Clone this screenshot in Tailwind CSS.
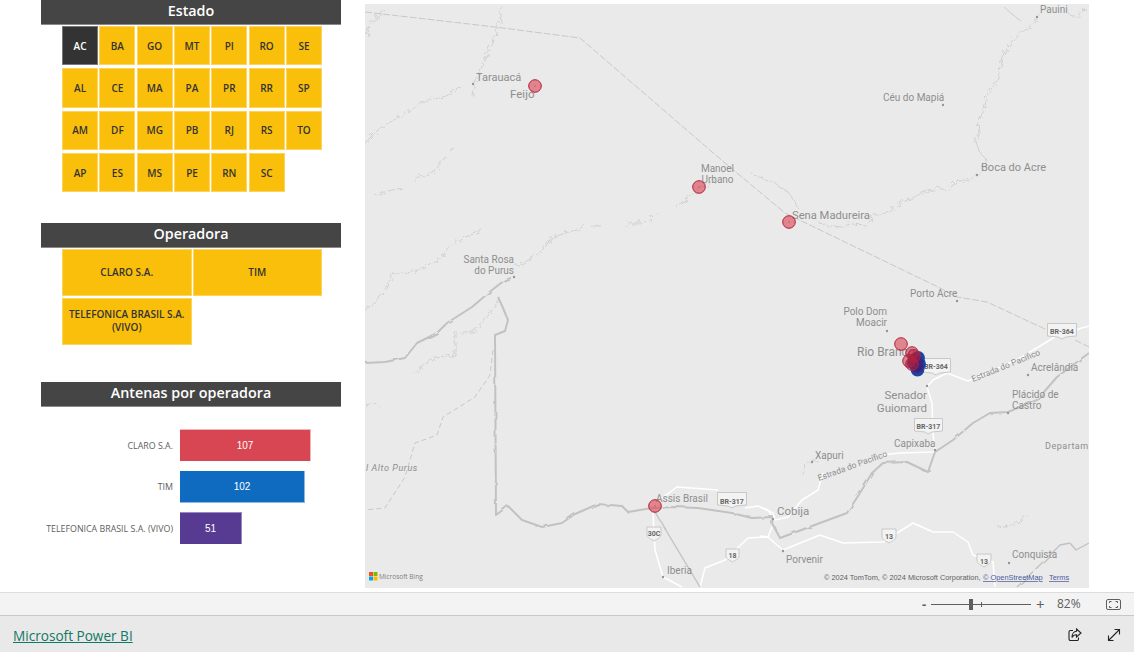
<!DOCTYPE html>
<html lang="pt-BR">
<head>
  <meta charset="UTF-8" />
  <title>Antenas por operadora</title>
  <script src="https://cdn.jsdelivr.net/npm/@tailwindcss/browser@4"></script>
</head>
<body class="bg-white w-[1134px] h-[652px] overflow-hidden font-['Open_Sans',sans-serif]">
  <div class="flex h-[592px]">
    <!-- Filtros -->
    <div class="ml-[41px] w-[300px] shrink-0">
      <h2 class="h-[25px] bg-[#454545] border-b border-[#8a8a8a] text-white text-[14.3px] leading-[21px] font-semibold text-center">Estado</h2>
      <div class="mt-px ml-[21px] w-[260px] grid grid-cols-7 gap-x-[1.2px] gap-y-[3px] auto-rows-[39.3px] text-[10px] font-semibold text-[#333]">
        <div class="flex items-center justify-center pt-px bg-[#333] border border-[#777] text-white">AC</div>
        <div class="flex items-center justify-center pt-px bg-[#fabf0b] border border-[#fcd35c]">BA</div>
        <div class="flex items-center justify-center pt-px bg-[#fabf0b] border border-[#fcd35c]">GO</div>
        <div class="flex items-center justify-center pt-px bg-[#fabf0b] border border-[#fcd35c]">MT</div>
        <div class="flex items-center justify-center pt-px bg-[#fabf0b] border border-[#fcd35c]">PI</div>
        <div class="flex items-center justify-center pt-px bg-[#fabf0b] border border-[#fcd35c]">RO</div>
        <div class="flex items-center justify-center pt-px bg-[#fabf0b] border border-[#fcd35c]">SE</div>
        <div class="flex items-center justify-center pt-px bg-[#fabf0b] border border-[#fcd35c]">AL</div>
        <div class="flex items-center justify-center pt-px bg-[#fabf0b] border border-[#fcd35c]">CE</div>
        <div class="flex items-center justify-center pt-px bg-[#fabf0b] border border-[#fcd35c]">MA</div>
        <div class="flex items-center justify-center pt-px bg-[#fabf0b] border border-[#fcd35c]">PA</div>
        <div class="flex items-center justify-center pt-px bg-[#fabf0b] border border-[#fcd35c]">PR</div>
        <div class="flex items-center justify-center pt-px bg-[#fabf0b] border border-[#fcd35c]">RR</div>
        <div class="flex items-center justify-center pt-px bg-[#fabf0b] border border-[#fcd35c]">SP</div>
        <div class="flex items-center justify-center pt-px bg-[#fabf0b] border border-[#fcd35c]">AM</div>
        <div class="flex items-center justify-center pt-px bg-[#fabf0b] border border-[#fcd35c]">DF</div>
        <div class="flex items-center justify-center pt-px bg-[#fabf0b] border border-[#fcd35c]">MG</div>
        <div class="flex items-center justify-center pt-px bg-[#fabf0b] border border-[#fcd35c]">PB</div>
        <div class="flex items-center justify-center pt-px bg-[#fabf0b] border border-[#fcd35c]">RJ</div>
        <div class="flex items-center justify-center pt-px bg-[#fabf0b] border border-[#fcd35c]">RS</div>
        <div class="flex items-center justify-center pt-px bg-[#fabf0b] border border-[#fcd35c]">TO</div>
        <div class="flex items-center justify-center pt-px bg-[#fabf0b] border border-[#fcd35c]">AP</div>
        <div class="flex items-center justify-center pt-px bg-[#fabf0b] border border-[#fcd35c]">ES</div>
        <div class="flex items-center justify-center pt-px bg-[#fabf0b] border border-[#fcd35c]">MS</div>
        <div class="flex items-center justify-center pt-px bg-[#fabf0b] border border-[#fcd35c]">PE</div>
        <div class="flex items-center justify-center pt-px bg-[#fabf0b] border border-[#fcd35c]">RN</div>
        <div class="flex items-center justify-center pt-px bg-[#fabf0b] border border-[#fcd35c]">SC</div>
      </div>

      <h2 class="mt-[31px] h-[25px] bg-[#454545] border-b border-[#8a8a8a] text-white text-[14.3px] leading-[21px] font-semibold text-center">Operadora</h2>
      <div class="mt-px ml-[21px] w-[260px] grid grid-cols-2 gap-x-px gap-y-[2.5px] auto-rows-[46.5px] text-[10px] leading-[13px] font-semibold text-[#333] text-center">
        <div class="flex items-center justify-center bg-[#fabf0b] border border-[#fcd35c]">CLARO S.A.</div>
        <div class="flex items-center justify-center bg-[#fabf0b] border border-[#fcd35c]">TIM</div>
        <div class="flex items-center justify-center bg-[#fabf0b] border border-[#fcd35c]">TELEFONICA BRASIL S.A.<br />(VIVO)</div>
      </div>

      <h2 class="mt-[37.3px] h-[25px] bg-[#454545] border-b border-[#8a8a8a] text-white text-[14.3px] leading-[21px] font-semibold text-center">Antenas por operadora</h2>
      <div class="mt-[22.3px] flex flex-col gap-[9.5px] text-[8.85px] text-[#605e5c]">
        <div class="flex items-center h-[32px]">
          <span class="w-[132px] pt-[2px] text-right mr-[7px] whitespace-nowrap">CLARO S.A.</span>
          <div class="w-[131px] h-full flex items-center justify-center bg-[#d84553] border-r border-t border-[#f0b5bb] text-white text-[10px] font-['Liberation_Sans',sans-serif]">107</div>
        </div>
        <div class="flex items-center h-[32px]">
          <span class="w-[132px] pt-[2px] text-right mr-[7px] whitespace-nowrap">TIM</span>
          <div class="w-[125px] h-full flex items-center justify-center bg-[#0f6bc0] border-r border-b border-[#8db8e4] text-white text-[10px] font-['Liberation_Sans',sans-serif]">102</div>
        </div>
        <div class="flex items-center h-[32px]">
          <span class="w-[132px] pt-[2px] text-right mr-[7px] whitespace-nowrap">TELEFONICA BRASIL S.A. (VIVO)</span>
          <div class="w-[62px] h-full flex items-center justify-center bg-[#573b93] border-r border-t border-[#9a88c2] text-white text-[10px] font-['Liberation_Sans',sans-serif]">51</div>
        </div>
      </div>
    </div>

    <!-- Mapa -->
    <div class="ml-[24px] mt-[4px] w-[724px] h-[584px] shrink-0 bg-[#eaeaea] overflow-hidden">
      <svg class="block font-['Roboto',sans-serif]" width="724" height="584" viewBox="365 4 724 584" fill="none">
        <defs>
          <filter id="soft" filterUnits="userSpaceOnUse" x="365" y="4" width="724" height="584">
            <feTurbulence type="fractalNoise" baseFrequency="0.09" numOctaves="2" seed="4" result="n" />
            <feDisplacementMap in="SourceGraphic" in2="n" scale="3" />
            <feGaussianBlur stdDeviation="0.65" />
          </filter>
          <filter id="wiggle" filterUnits="userSpaceOnUse" x="365" y="4" width="724" height="584">
            <feTurbulence type="fractalNoise" baseFrequency="0.22" numOctaves="2" seed="7" result="n" />
            <feDisplacementMap in="SourceGraphic" in2="n" scale="7" />
            <feGaussianBlur stdDeviation="0.3" />
          </filter>
          <filter id="road" filterUnits="userSpaceOnUse" x="365" y="4" width="724" height="584">
            <feGaussianBlur stdDeviation="0.35" />
          </filter>
        </defs>

        <!-- rios -->
        <g stroke="#cfcfcf" stroke-width="1" stroke-linejoin="round" filter="url(#wiggle)">
          <path d="M503 7L499 15L501 20L497 28L495 36L493 43L489 50L483 63L480 72L474 86L473 97" />
          <path d="M385 10L376 18L368 25L369 30L367 35" />
          <path d="M462 88L455 90L448 95L440 98L434 97L428 102L422 103L416 107L407 112L400 117L394 120L388 123L378 130L371 137L365 143" />
          <path d="M453 146L450 152L443 160L438 167L432 172L424 176L420 175L415 182" />
          <path d="M402 188L392 190L384 192L378 196L373 193" />
          <path d="M482 228L476 233L465 237L456 243L448 247L443 256L438 262L433 262L428 265L418 270L408 273L392 275L388 283L385 290L378 297" />
          <path d="M515 267L525 262L532 258L540 252L545 247L552 237L560 235L568 232L578 230L585 225M592 228L596 225L602 227M627 228L628 223L642 223L650 219L657 212M675 208L682 202L690 197L698 188L706 186L712 183L718 177" />
          <path d="M753 175L763 178L775 183L781 188L787 191L792 197L798 208M818 222L828 226L842 227L850 224L867 225L871 222L872 215L880 215L885 213L892 209L900 203L910 199L922 193L932 190L938 187L948 192L952 186L958 180L966 181L977 175L983 170L987 160L981 154L975 140L979 132L978 123L984 110L988 93L995 84L998 77L1000 67L1002 57L1008 47L1015 37L1025 30L1035 23L1040 13" />
          <path d="M1005 8L1012 14L1022 22M1068 13L1073 17L1078 17L1082 11L1087 10" />
          <path d="M365 310L375 302L385 290M413 377L420 369L435 357L445 356L455 355L455 344L455 333L465 332L475 332L485 320L492 310L498 300M365 405L372 404L380 405" />
          <path d="M1005 527L1017 523L1027 515M998 527L1004 526M803 477L805 463L812 461L818 461" />
        </g>
        <!-- limites tracejados -->
        <g stroke="#c8c8c8" stroke-width="1" stroke-dasharray="7 2">
          <path d="M365 12L495 27L580 38L725 163L785 213L938 287L957 297L987 302L1047 330M1075 340L1089 347" />
        </g>
        <path d="M493 350L490 375L475 397L443 417L437 435L415 443L405 477L385 508L365 510" stroke="#c8c8c8" stroke-width="1" stroke-dasharray="5 3" />

        <!-- estradas -->
        <g stroke="#fff" stroke-width="1.500" stroke-linejoin="round" filter="url(#road)">
          <path d="M662 498L677 487L718 490M745 508L758 506L773 513L775 520L788 517L802 500L818 490L823 473" />
          <path d="M882 455L900 453L933 452L935 450L933 433L932 403L927 387L933 380L947 373L968 381L990 372L1020 358L1050 340L1058 335L1075 330L1089 326" />
          <path d="M760 507L768 510L773 518M772 527L768 537L777 545L783 550L820 535L843 543L883 542L913 523L933 532L953 532L968 542L973 555L993 562L995 587M760 536L768 537" />
          <path d="M768 537L748 538L725 560L705 568L700 587M653 513L655 550L663 577L682 587" />
        </g>

        <!-- limite estadual -->
        <g stroke="#c2c2c2" stroke-width="2" stroke-linejoin="round" filter="url(#soft)">
          <path d="M365 363L385 362L405 358L417 343L437 333L447 323L472 307L492 290L505 280L511 278" />
          <path d="M498 297L503 308L508 320L505 331L495 335L496 515L508 506L522 520L542 527L562 523L575 514L598 504L622 506L628 512L652 508L675 507L698 508L732 513L752 518L773 517L772 523L780 538L820 523L847 513L860 493L872 473L883 463L907 462L928 472L935 452L953 440L973 423L990 413L1008 412L1037 400L1057 377L1089 353" />
          <path d="M655 512L700 587" stroke-width="1.400" />
          <path d="M1017 587L1043 562L1060 545L1070 543L1076 550L1089 543" stroke-width="1.400" />
        </g>

        <!-- pontos das cidades -->
        <g fill="#959595">
          <circle cx="473" cy="84" r="1.200" /><circle cx="943" cy="105" r="1.200" /><circle cx="977" cy="175" r="1.200" />
          <circle cx="1037" cy="17" r="1.200" /><circle cx="887" cy="331" r="1.200" /><circle cx="927" cy="386" r="1.200" />
          <circle cx="1028" cy="375" r="1.200" /><circle cx="1008" cy="413" r="1.200" /><circle cx="935" cy="450" r="1.200" />
          <circle cx="812" cy="462" r="1.200" /><circle cx="773" cy="519" r="1.200" /><circle cx="783" cy="551" r="1.200" />
          <circle cx="663" cy="577" r="1.200" /><circle cx="1009" cy="563" r="1.200" /><circle cx="957" cy="301" r="1.200" />
          <circle cx="514" cy="277" r="1.200" />
        </g>

        <!-- escudos das rodovias -->
        <g fill="#f3f3f3" stroke="#c8c8c8" stroke-width="1">
          <path d="M1047.500 323.500H1076.500V336L1066 337L1062 339L1058 337L1047.500 336Z" />
          <path d="M921.500 358.500H950.500V372L940 373L936 375L932 373L921.500 372Z" />
          <path d="M914.500 418.500H942.500V431L932 432L928 434L925 432L914.500 431Z" />
          <path d="M717.500 492.500H746.500V505L736 506L732 508L728 506L717.500 505Z" />
          <path d="M647 527H661V534C661 538 657 539 654 541C651 539 647 538 647 534Z" />
          <path d="M726 549H739V556C739 559 735 560 732.500 562C730 560 726 559 726 556Z" />
          <path d="M882 529H896V536C896 540 892 541 889 543C886 541 882 540 882 536Z" />
          <path d="M977 554H991V560C991 564 987 565 984 567C981 565 977 564 977 560Z" />
        </g>
        <g font-size="7" font-weight="700" fill="#666" text-anchor="middle">
          <text x="1062" y="334">BR-364</text>
          <text x="936" y="369">BR-364</text>
          <text x="928.500" y="429">BR-317</text>
          <text x="732" y="504">BR-317</text>
          <text x="654" y="536">30C</text>
          <text x="732.500" y="558">18</text>
          <text x="889" y="539">13</text>
          <text x="984" y="564">13</text>
        </g>

        <!-- nomes -->
        <g fill="#8e8e8e" font-size="10">
          <text x="476" y="81" font-size="11">Tarauacá</text>
          <text x="510" y="98" font-size="11.500">Feijó</text>
          <text x="717.500" y="172" text-anchor="middle">Manoel</text>
          <text x="717.500" y="183" text-anchor="middle">Urbano</text>
          <text x="514" y="263" text-anchor="end">Santa Rosa</text>
          <text x="514" y="274" text-anchor="end">do Purus</text>
          <text x="1040" y="13">Pauini</text>
          <text x="883" y="101">Céu do Mapiá</text>
          <text x="981" y="171" font-size="11">Boca do Acre</text>
          <text x="792" y="219" font-size="11.200">Sena Madureira</text>
          <text x="910" y="297">Porto Acre</text>
          <text x="887" y="315" text-anchor="end">Polo Dom</text>
          <text x="887" y="326" text-anchor="end">Moacir</text>
          <text x="857" y="356" font-size="12">Rio Branco</text>
          <text x="927" y="399" text-anchor="end" font-size="11.500">Senador</text>
          <text x="927" y="412" text-anchor="end" font-size="11.500">Guiomard</text>
          <text x="1031" y="371">Acrelândia</text>
          <text x="1012" y="398">Plácido de</text>
          <text x="1012" y="409">Castro</text>
          <text x="894" y="447">Capixaba</text>
          <text x="1045" y="449" font-size="9" letter-spacing="0.500">Departam</text>
          <text x="815" y="459">Xapuri</text>
          <text x="777" y="515" font-size="11.500">Cobija</text>
          <text x="656" y="502">Assis Brasil</text>
          <text x="366" y="471" font-size="9" font-style="italic" letter-spacing="0.600">l Alto Purus</text>
          <text x="786" y="563">Porvenir</text>
          <text x="667" y="574">Iberia</text>
          <text x="1012" y="558">Conquista</text>
          <text transform="translate(819 481) rotate(-20)" font-size="8.500">Estrada do Pacífico</text>
          <text transform="translate(973 382) rotate(-22)" font-size="8.500">Estrada do Pacífico</text>
        </g>

        <!-- marcadores -->
        <g fill="#d8404f" fill-opacity="0.6" stroke="#b5203a" stroke-width="1">
          <circle cx="535" cy="86" r="6.300" />
          <circle cx="699" cy="187" r="6.300" />
          <circle cx="789" cy="222" r="6.300" />
          <circle cx="655" cy="506" r="6.300" />
          <circle cx="901" cy="344" r="6.300" />
        </g>
        <g fill="#c0303f" fill-opacity="0.6">
          <circle cx="535" cy="86" r="0.700" />
          <circle cx="699" cy="187" r="0.700" />
          <circle cx="789" cy="222" r="0.700" />
          <circle cx="655" cy="506" r="0.700" />
        </g>
        <g fill="#12308c" fill-opacity="0.9" stroke="#1446b0" stroke-width="1.200">
          <circle cx="918" cy="358" r="6.300" />
          <circle cx="919" cy="364" r="6.300" />
          <circle cx="917.500" cy="369.500" r="6.300" />
          <circle cx="914" cy="363" r="6.300" />
        </g>
        <g fill="#3f1f78" fill-opacity="0.8" stroke="#3b2a80" stroke-width="1.200">
          <circle cx="915" cy="360" r="6.300" />
          <circle cx="917" cy="366" r="6.300" />
        </g>
        <g fill="#b81f3c" fill-opacity="0.5" stroke="#b5203a" stroke-width="1">
          <circle cx="909" cy="361" r="6.300" />
          <circle cx="912" cy="364" r="6.300" />
          <circle cx="912" cy="353" r="6.300" />
          <circle cx="914" cy="356" r="6.300" />
        </g>

        <!-- logo e créditos -->
        <rect x="369" y="572" width="4" height="4" fill="#f25022" />
        <rect x="373.500" y="572" width="4" height="4" fill="#7fba00" />
        <rect x="369" y="576.500" width="4" height="4" fill="#00a4ef" />
        <rect x="373.500" y="576.500" width="4" height="4" fill="#ffb900" />
        <text x="379" y="579" font-size="6.500" fill="#808080" font-family="Open Sans, sans-serif">Microsoft Bing</text>
        <g font-size="7.400" font-family="Liberation Sans, sans-serif">
          <text x="824" y="580" fill="#5f5f5f">© 2024 TomTom, © 2024 Microsoft Corporation,</text>
          <text x="983" y="580" fill="#4a5d9c" text-decoration="underline">© OpenStreetMap</text>
          <text x="1049" y="580" fill="#4a5d9c" text-decoration="underline">Terms</text>
        </g>
      </svg>
    </div>
  </div>

  <!-- Barra de zoom -->
  <div class="h-[23px] bg-[#f3f3f3] border-t border-[#dcdcdc] flex items-center text-[#605e5c]">
    <span class="ml-[922px] w-[9px] text-[13px] leading-none font-bold">-</span>
    <div class="relative w-[100px] h-px bg-[#605e5c]">
      <div class="absolute left-[38px] top-[-5px] w-[4px] h-[11px] bg-[#605e5c]"></div>
      <div class="absolute left-[50px] top-[-2px] w-px h-[5px] bg-[#605e5c]"></div>
    </div>
    <span class="ml-[5px] w-[10px] text-[15px] leading-none">+</span>
    <span class="ml-[11px] text-[12px] leading-none">82%</span>
    <svg class="ml-[25px]" width="15" height="11" viewBox="0 0 15 11" fill="none" stroke="#605e5c">
      <rect x="0.500" y="0.500" width="14" height="10" rx="1.500" />
      <path d="M3.500 4V2.500H5.500M9.500 2.500H11.500V4M11.500 7V8.500H9.500M5.500 8.500H3.500V7" />
    </svg>
  </div>

  <!-- Rodapé -->
  <div class="h-[37px] bg-[#e9e9e9] border-t border-[#c8c8c8] flex items-center">
    <a href="#" class="ml-[13px] mt-[4px] w-[120px] text-[13.6px] text-[#117865] underline whitespace-nowrap">Microsoft Power BI</a>
    <svg class="ml-[935px] mt-[1px]" width="14" height="14" viewBox="0 0 14 14" fill="none" stroke="#252423" stroke-width="1.100">
      <path d="M5 2.500H2.500A1.500 1.500 0 0 0 1 4V11A1.500 1.500 0 0 0 2.500 12.500H9A1.500 1.500 0 0 0 10.500 11V9.500" />
      <path d="M8.500 1L13 5L8.500 9V6.800C6.500 6.800 5 7.500 4 9.500C4 6 6 3.500 8.500 3.300Z" />
    </svg>
    <svg class="ml-[25px] mt-[1px]" width="14" height="14" viewBox="0 0 14 14" fill="none" stroke="#252423" stroke-width="1.100">
      <path d="M1.500 12.500L12.500 1.500M7.500 1.500H12.500V6.500M1.500 7.500V12.500H6.500" />
    </svg>
  </div>
</body>
</html>
